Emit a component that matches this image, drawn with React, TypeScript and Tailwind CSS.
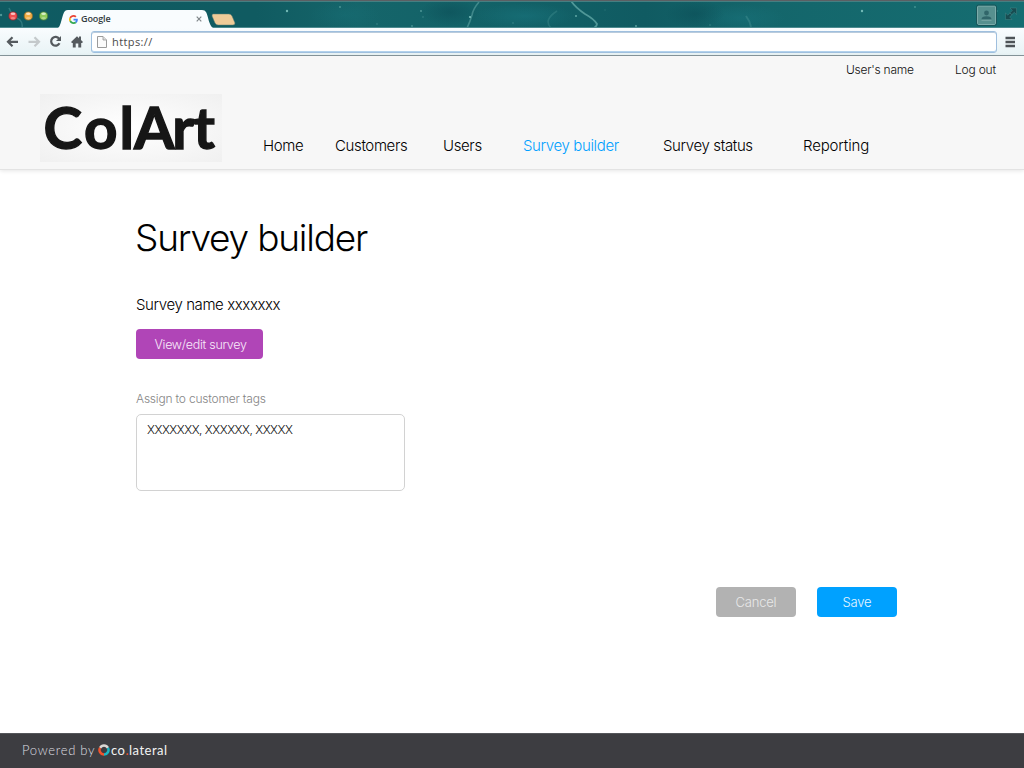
import React from "react";

const stars = [
  [287, 11, 1.2, 0.75], [340, 7, 0.9, 0.45], [421, 11, 0.9, 0.5], [470, 17, 1.1, 0.8],
  [412, 26, 0.9, 0.4], [513, 23, 0.8, 0.3], [576, 16, 1, 0.6], [636, 26, 0.9, 0.6],
  [605, 10, 0.7, 0.2], [862, 11, 1.2, 0.75], [915, 7, 0.9, 0.4], [997, 11, 0.8, 0.4],
  [377, 24, 0.9, 0.2], [423, 17, 0.9, 0.2], [1, 15, 1.2, 0.5], [710, 25, 0.8, 0.3],
];

function SpaceBackdrop() {
  return (
    <svg className="absolute inset-0" width="1024" height="28" viewBox="0 0 1024 28" aria-hidden="true">
      <defs>
        <linearGradient id="teal" x1="0" x2="1" y1="0" y2="0">
          <stop offset="0" stopColor="#0f5b62" />
          <stop offset="0.25" stopColor="#105b61" />
          <stop offset="0.35" stopColor="#15656a" />
          <stop offset="0.5" stopColor="#126167" />
          <stop offset="0.63" stopColor="#105b62" />
          <stop offset="0.75" stopColor="#14666b" />
          <stop offset="1" stopColor="#156d71" />
        </linearGradient>
        <radialGradient id="cloud">
          <stop offset="0" stopColor="#1b7a84" stopOpacity="0.75" />
          <stop offset="1" stopColor="#1b7a84" stopOpacity="0" />
        </radialGradient>
        <radialGradient id="dark">
          <stop offset="0" stopColor="#0c4f58" stopOpacity="0.6" />
          <stop offset="1" stopColor="#0c4f58" stopOpacity="0" />
        </radialGradient>
      </defs>
      <rect width="1024" height="28" fill="url(#teal)" />
      <ellipse cx="525" cy="16" rx="50" ry="13" fill="url(#cloud)" opacity="0.6" />
      <ellipse cx="740" cy="18" rx="45" ry="14" fill="url(#cloud)" opacity="0.5" />
      <ellipse cx="345" cy="15" rx="35" ry="14" fill="url(#cloud)" opacity="0.3" />
      <ellipse cx="695" cy="14" rx="30" ry="14" fill="url(#dark)" />
      <ellipse cx="450" cy="12" rx="30" ry="14" fill="url(#dark)" />
      <g fill="none" stroke="#6bb0ae">
        <path d="M479 2Q473 9 472 15Q470 22 467 28" strokeWidth="1.6" opacity="0.5" />
        <path d="M571 1Q576 8 585 14Q594 19 597 24Q597 26 594 28" strokeWidth="1.8" opacity="0.7" />
        <path d="M557 11Q543 20 551 28" strokeWidth="1.6" opacity="0.22" />
        <path d="M746 16Q750 21 751 27" strokeWidth="2" opacity="0.25" />
        <path d="M9 8Q12 16 20 20Q23 23 22 28" strokeWidth="1.5" opacity="0.35" />
      </g>
      {stars.map(([x, y, r, o], i) => (
        <circle key={i} cx={x} cy={y} r={r} fill="#92d6cf" opacity={o} />
      ))}
      <rect width="1024" height="1" fill="#5c5f63" />
      <rect y="1" width="1024" height="1" fill="#457f82" />
      <rect y="27" width="1024" height="1" fill="#4d8b90" />
      <path d="M58 28C61 27 62 14 65 11Q66 10 68 10H202Q205 10 206 12C208 15 209 26 213 28Z" fill="#f9fcfe" />
      <path d="M213 14H229Q231 14 232 16L235 23Q235 25 233 25H218Q216 25 215 23L212 16Q212 14 213 14Z" fill="#efcb98" stroke="#5d7c70" strokeWidth="0.5" />
    </svg>
  );
}

function TrafficLights() {
  return (
    <svg width="60" height="28" viewBox="0 0 60 28" className="shrink-0" aria-hidden="true">
      {[["13", "#ef4f50", "#8f2a31"], ["28.3", "#f4ad43", "#92702e"], ["43.6", "#8ecb5b", "#47803a"]].map(([x, fill, edge]) => (
        <g key={x}>
          <circle cx={x} cy="16" r="4.1" fill={fill} stroke={edge} strokeWidth="0.8" />
          <ellipse cx={x} cy="13.8" rx="2.3" ry="1.3" fill="#fff" opacity="0.65" />
          <ellipse cx={x} cy="18.2" rx="2.2" ry="1.2" fill="#fff" opacity="0.3" />
        </g>
      ))}
    </svg>
  );
}

function GoogleMark() {
  return (
    <svg width="9" height="9" viewBox="0 0 48 48" aria-hidden="true">
      <path fill="#ea4335" d="M24 9.5c3.5 0 6.700 1.200 9.200 3.600l6.900-6.900C35.900 2.400 30.500 0 24 0 14.600 0 6.500 5.400 2.600 13.200l8 6.200C12.400 13.700 17.700 9.500 24 9.500z" />
      <path fill="#4285f4" d="M47 24.500c0-1.600-.2-3.100-.4-4.500H24v9h12.900c-.6 3-2.300 5.500-4.800 7.200l7.700 6C44.400 38 47 31.800 47 24.500z" />
      <path fill="#fbbc05" d="M10.500 28.600c-.5-1.500-.8-3-.8-4.600s.3-3.100.8-4.600l-8-6.200C.9 16.500 0 20.100 0 24s.9 7.500 2.600 10.800z" />
      <path fill="#34a853" d="M24 48c6.500 0 11.900-2.100 15.900-5.800l-7.700-6c-2.200 1.500-4.900 2.300-8.200 2.300-6.300 0-11.600-4.200-13.500-9.900l-8 6.200C6.500 42.600 14.600 48 24 48z" />
    </svg>
  );
}

function WindowControls() {
  return (
    <svg width="52" height="28" viewBox="0 0 52 28" className="ml-auto shrink-0" aria-hidden="true">
      <rect x="5.500" y="6" width="18" height="18.500" rx="1" fill="#57908f" stroke="#8fb7b5" strokeWidth="0.8" />
      <rect x="4.500" y="5" width="20" height="20.500" rx="2" fill="none" stroke="#1b4f53" strokeWidth="0.8" />
      <g fill="#31666a">
        <circle cx="14.500" cy="13" r="2.400" />
        <path d="M9.500 19.500Q9.500 16.200 14.500 16.200T19.500 19.500Z" />
      </g>
      <path d="M9.500 20.200H19.500" stroke="#8fb7b5" strokeWidth="0.7" />
      <g fill="#174c51" stroke="#6b9b9b" strokeWidth="0.3">
        <path d="M38 8H44.500V14.500L42.300 12.300L39.800 14.600L38 12.800L40.400 10.400Z" />
        <path d="M33.500 13L35.800 15.200L38 13L39.800 14.800L37.600 17.100L40 19.500H33.500Z" />
      </g>
    </svg>
  );
}

function BrowserChrome() {
  return (
    <div className="h-14 w-full shrink-0">
      <div className="relative h-7 w-full">
        <SpaceBackdrop />
        <div className="relative flex h-7">
          <TrafficLights />
          <div className="flex h-[18px] w-[150px] items-center mt-[10px] pl-[9px] pr-[8px]">
            <GoogleMark />
            <span className="ml-[3px] font-['Open_Sans',sans-serif] text-[9px] leading-[18px] font-semibold text-[#333a40] tracking-[-0.1px]">Google</span>
            <svg className="ml-auto" width="6" height="6" viewBox="0 0 6 6" aria-hidden="true">
              <path d="M.7.7L5.300 5.300M5.300.7L.7 5.300" stroke="#80868a" strokeWidth="1.200" />
            </svg>
          </div>
          <WindowControls />
        </div>
      </div>
      <div className="flex h-7 items-center border-b border-[#87969b] bg-linear-to-b from-[#f9fcfe] to-[#e8f3f5]">
        <svg width="91" height="27" viewBox="0 28 91 27" className="shrink-0" aria-hidden="true">
          <g fill="none" strokeWidth="2.200">
            <path d="M18 41.800H8.500M12.500 37.300L8 41.800L12.500 46.300" stroke="#555a5e" />
            <path d="M28.500 41.800H38M34.500 37.300L39 41.800L34.500 46.300" stroke="#c4c9cb" />
            <path d="M59.200 38.800A4.400 4.400 0 1 0 59.500 43.300" stroke="#555a5e" />
          </g>
          <path d="M61 36V41H56Z" fill="#555a5e" />
          <path d="M71 42L77 36.300L79 38.200V36.600H81V40L83 42L82 43H81.200V47.500H78.300V43.500H75.700V47.500H72.800V43H72Z" fill="#555a5e" />
        </svg>
        <div className="flex h-[22px] w-[906px] shrink-0 items-center rounded-[3px] border border-[#9fbfde] bg-white pl-[5px] shadow-[inset_0_1px_0_#b9cbdc,inset_0_-1px_0_#b3d2ec]">
          <svg width="10" height="12" viewBox="0 0 10 12" aria-hidden="true">
            <path d="M.5.500H6L9.500 4V11.500H.500Z" fill="#fbfbfb" stroke="#9b9b9b" />
            <path d="M6 .5V4H9.500" fill="#ddd" stroke="#9b9b9b" strokeWidth="0.800" />
          </svg>
          <span className="ml-[5px] font-['Open_Sans',sans-serif] text-[11px] leading-5 font-normal tracking-[0.4px] text-[#4a4a4a]">https://</span>
        </div>
        <svg width="27" height="27" viewBox="997 28 27 27" className="shrink-0" aria-hidden="true">
          <path d="M1005.500 38H1015M1005.500 42H1015M1005.500 46H1015" stroke="#4e5357" strokeWidth="2.400" />
        </svg>
      </div>
    </div>
  );
}

function ColArtLogo() {
  return (
    <svg
      width="182"
      height="68"
      viewBox="0 0 182 68"
      className="shrink-0 overflow-visible bg-[radial-gradient(ellipse_at_center,#ffffff_0%,#fafafa_35%,#f0f0f0_100%)]"
    >
      <text
        transform="scale(1.05 1.02)"
        x="3.4 42 75.8 89.6 126 146"
        y="53.6"
        className="fill-[#161616] stroke-[#161616] stroke-[1.3px] font-['Lato',sans-serif] text-[55.5px] font-bold"
      >
        ColArt
      </text>
    </svg>
  );
}

function SiteHeader() {
  return (
    <header className="h-[114px] w-full shrink-0 border-b border-[#e3e3e3] bg-[#f7f7f7] shadow-[0_1px_4px_rgba(0,0,0,0.1)]">
      <div className="flex h-[38px] pl-[846px] pt-[4px] text-[12px] leading-5 text-[#111]">
        <a className="w-[109px] tracking-[-0.25px]">User's name</a>
        <a className="whitespace-nowrap tracking-[-0.2px]">Log out</a>
      </div>
      <div className="flex pl-10">
        <ColArtLogo />
        <nav className="flex pt-[42px] pl-[41px] text-[15px] leading-5 tracking-[-0.37px] text-black">
          <a className="w-[72px] whitespace-nowrap">Home</a>
          <a className="w-[108px] whitespace-nowrap">Customers</a>
          <a className="w-[80px] whitespace-nowrap">Users</a>
          <a className="w-[140px] whitespace-nowrap text-[#00a0ff]">Survey builder</a>
          <a className="w-[140px] whitespace-nowrap">Survey status</a>
          <a className="whitespace-nowrap tracking-[-0.15px]">Reporting</a>
        </nav>
      </div>
    </header>
  );
}

function SurveyForm() {
  return (
    <main className="flex-1 pl-[136px] pt-[44px]">
      <h1 className="-ml-px h-12 text-[37px] leading-[48px] tracking-[-1.2px] whitespace-nowrap text-black">Survey builder</h1>
      <p className="mt-[33px] text-[15px] leading-5 tracking-[-0.4px] text-black">Survey name xxxxxxx</p>
      <button className="mt-[14px] block h-[30px] w-[127px] rounded-[4px] bg-[#b045b7] pl-[2px] text-[12.5px] font-light leading-[31px] tracking-[-0.3px] text-[#f8eafa]"><span className="block pt-px leading-[30px]">View/edit survey</span></button>
      <label className="mt-[30px] block text-[12px] leading-5 tracking-[-0.2px] text-[#858585]">Assign to customer tags</label>
      <div className="mt-[5px] h-[77px] w-[269px] rounded-[5px] border border-[#d2d2d2] bg-white pl-[10px] pt-[5px] text-[12px] leading-5 tracking-[-0.5px] text-[#111]">XXXXXXX, XXXXXX, XXXXX</div>
      <div className="mt-[96px] flex gap-[21px] pl-[580px]">
        <button className="h-[30px] w-[80px] rounded-[4px] bg-[#b2b2b2] text-[13px] font-light leading-[31px] tracking-[-0.2px] text-[#e8e8e8]">Cancel</button>
        <button className="h-[30px] w-[80px] rounded-[4px] bg-[#00a1ff] text-[13px] font-light leading-[31px] tracking-[-0.2px] text-[#e6f6ff]">Save</button>
      </div>
    </main>
  );
}

function SiteFooter() {
  return (
    <footer className="flex h-[35px] shrink-0 items-center border-t border-[#55565a] bg-[#3d3d41] pb-[2px] pl-[22px] font-['Lato',sans-serif] text-[13px] leading-5 font-light text-[#dedee0]">
      <span className="w-[76px] whitespace-nowrap tracking-[0.7px]">Powered by</span>
      <svg width="12" height="12" viewBox="0 0 12 12" aria-hidden="true">
        <g fill="none" strokeWidth="2.500">
          <path d="M2.100 3.800A4.400 4.400 0 0 1 9.900 3.800" stroke="#d9d6d3" />
          <path d="M9.900 3.800A4.400 4.400 0 0 1 6 10.400" stroke="#19b7c4" />
          <path d="M6 10.400A4.400 4.400 0 0 1 2.100 3.800" stroke="#f0532d" />
        </g>
      </svg>
      <span className="ml-px whitespace-nowrap font-normal tracking-[0.5px] text-[#f3f3f3]">co<span className="text-[#f0532d]">.</span>lateral</span>
    </footer>
  );
}

export default function App() {
  return (
    <div className="flex h-[768px] w-[1024px] flex-col overflow-hidden bg-white font-['Inter','Liberation_Sans',sans-serif] font-light">
      <BrowserChrome />
      <SiteHeader />
      <SurveyForm />
      <SiteFooter />
    </div>
  );
}
